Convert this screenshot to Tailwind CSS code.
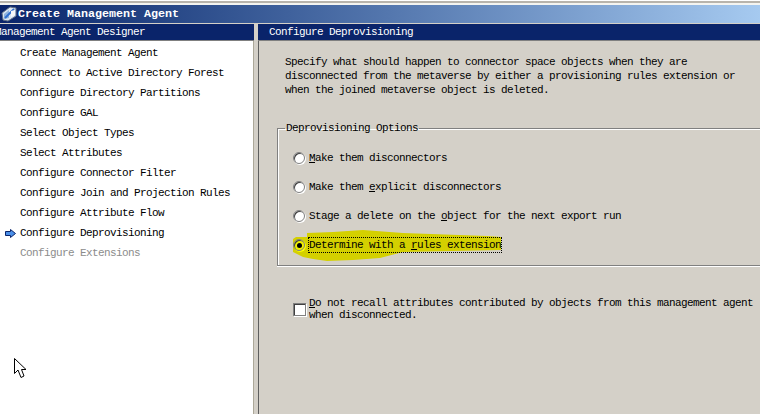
<!DOCTYPE html>
<html lang="en">
<head>
<meta charset="UTF-8">
<title>Create Management Agent</title>
<script src="https://cdn.jsdelivr.net/npm/@tailwindcss/browser@4"></script>
</head>
<body class="w-[760px] h-[414px] overflow-hidden bg-[#d4d0c8] font-['Liberation_Mono',monospace] text-[11px] tracking-[-0.6px] leading-[14px] text-black">
  <!-- window edge -->
  <div class="h-px bg-white"></div>
  <div class="h-[2px] bg-[#b8b4ac]"></div>
  <div class="h-[2px] bg-[#f4f4f0]"></div>

  <!-- title bar -->
  <div class="h-[18px] flex items-center bg-gradient-to-r from-[#0a246a] to-[#a6caf0]">
    <svg class="w-[16px] h-[16px] ml-px" viewBox="0 0 16 16">
      <path d="M1 7 L9 1 L15 2 L15 10 L7 15 L2 14 Z" fill="#dbe6f2" stroke="#5f6f85" stroke-width="1"/>
      <path d="M3 8 L8 4 L8 12 L3 13 Z" fill="#8fb4de"/>
      <path d="M4 12 L13 3" stroke="#2f6fd0" stroke-width="2"/>
      <path d="M10 5 L14 4 L14 9 L10 11 Z" fill="#f8f8f8"/>
    </svg>
    <span class="ml-px text-[11.67px] tracking-normal font-bold text-white">Create Management Agent</span>
  </div>
  <div class="h-px bg-[#d4d0c8]"></div>

  <div class="flex h-[390px]">
    <!-- designer list -->
    <div class="w-[254px] shrink-0 flex flex-col">
      <div class="h-[16px] bg-[#0a246a] text-white flex items-center overflow-hidden">
        <span class="ml-[-5px] whitespace-nowrap">Management Agent Designer</span>
      </div>
      <div class="h-px bg-[#808080]"></div>
      <div class="flex-1 flex">
        <div class="flex-1 bg-white relative pt-[2px]">
          <ul>
            <li class="h-[20px] pl-[20px] flex items-center">Create Management Agent</li>
            <li class="h-[20px] pl-[20px] flex items-center">Connect to Active Directory Forest</li>
            <li class="h-[20px] pl-[20px] flex items-center">Configure Directory Partitions</li>
            <li class="h-[20px] pl-[20px] flex items-center">Configure GAL</li>
            <li class="h-[20px] pl-[20px] flex items-center">Select Object Types</li>
            <li class="h-[20px] pl-[20px] flex items-center">Select Attributes</li>
            <li class="h-[20px] pl-[20px] flex items-center">Configure Connector Filter</li>
            <li class="h-[20px] pl-[20px] flex items-center">Configure Join and Projection Rules</li>
            <li class="h-[20px] pl-[20px] flex items-center">Configure Attribute Flow</li>
            <li class="h-[20px] pl-[5px] flex items-center">
              <svg class="w-[11px] h-[9px] mr-[4px]" viewBox="0 0 11 9">
                <path d="M0.5 2.5 H5.5 V0.5 L10.5 4.5 L5.5 8.5 V6.5 H0.5 Z" fill="#4a8fe8" stroke="#0a246a" stroke-width="1"/>
              </svg>
              Configure Deprovisioning
            </li>
            <li class="h-[20px] pl-[20px] flex items-center text-[#8c8c8c]">Configure Extensions</li>
          </ul>
          <!-- mouse pointer -->
          <svg class="absolute left-[14px] top-[317px] w-[13px] h-[21px]" viewBox="0 0 13 21">
            <path d="M0.5 0.5 V15.5 L4 12 L7 19.5 L10 18 L7.5 11.5 H12 Z" fill="#fff" stroke="#000" stroke-width="1"/>
          </svg>
        </div>
        <div class="w-px bg-[#aca899]"></div>
      </div>
    </div>

    <!-- splitter -->
    <div class="w-[4px] shrink-0 bg-[#d4d0c8]"></div>

    <!-- page -->
    <div class="flex-1 flex flex-col min-w-0">
      <div class="h-[16px] bg-[#0a246a] text-white flex items-center pl-[11px]">Configure Deprovisioning</div>
      <div class="h-px bg-[#808080]"></div>
      <div class="relative flex-1 pl-[18px] border-l border-l-[#5f5f5f]">
        <p class="pt-[14px] pl-[8px] whitespace-pre">Specify what should happen to connector space objects when they are
disconnected from the metaverse by either a provisioning rules extension or
when the joined metaverse object is deleted.</p>

        <!-- highlighter mark -->
        <svg class="absolute left-[34px] top-[189px] w-[208px] h-[32px]" viewBox="0 0 208 32">
          <path d="M0 9 L3 7 L14 7 L14 3 L40 2 L70 0 L110 3 L194 6 L208 7 L208 20 L110 22 L87 28 L60 30 L34 31 L20 29 L10 27 L0 22 Z" fill="#d4d000"/>
        </svg>

        <fieldset class="relative mt-[24px] h-[145px] border-t border-l border-b border-[#808080] shadow-[inset_1px_1px_0_#fff,0_1px_0_#fff]">
          <legend class="ml-[7px] px-px">Deprovisioning Options</legend>
          <div class="flex flex-col gap-[15px] pt-[16px] pl-[15px]">
            <label class="flex items-center h-[14px] gap-[4px]">
              <span class="w-[12px] h-[12px] rounded-full bg-white border border-[#808080] shadow-[inset_1px_1px_0_#404040,1px_1px_0_#fff]"></span>
              <span><u>M</u>ake them disconnectors</span>
            </label>
            <label class="flex items-center h-[14px] gap-[4px]">
              <span class="w-[12px] h-[12px] rounded-full bg-white border border-[#808080] shadow-[inset_1px_1px_0_#404040,1px_1px_0_#fff]"></span>
              <span>Make them <u>e</u>xplicit disconnectors</span>
            </label>
            <label class="flex items-center h-[14px] gap-[4px]">
              <span class="w-[12px] h-[12px] rounded-full bg-white border border-[#808080] shadow-[inset_1px_1px_0_#404040,1px_1px_0_#fff]"></span>
              <span>Stage a delete on the <u>o</u>bject for the next export run</span>
            </label>
            <label class="flex items-center h-[14px] gap-[4px]">
              <span class="w-[12px] h-[12px] rounded-full bg-[#f0f000] border border-[#808080] shadow-[inset_1px_1px_0_#404040,1px_1px_0_#ffff00] flex items-center justify-center">
                <span class="w-[5px] h-[5px] rounded-full bg-black"></span>
              </span>
              <span class="outline-1 outline-dotted outline-black">Determine with a <u>r</u>ules extension</span>
            </label>
          </div>
        </fieldset>

        <label class="flex items-center gap-[3px] mt-[31px] ml-[16px]">
          <span class="w-[13px] h-[13px] shrink-0 bg-white border border-[#808080] shadow-[inset_1px_1px_0_#404040,1px_1px_0_#fff]"></span>
          <span class="leading-[12px] whitespace-pre"><u>D</u>o not recall attributes contributed by objects from this management agent
when disconnected.</span>
        </label>
      </div>
    </div>
  </div>
</body>
</html>
